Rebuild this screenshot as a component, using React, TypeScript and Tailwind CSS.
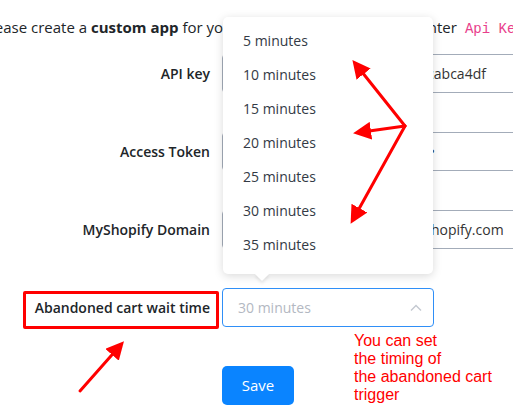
import React from 'react';

const options = [5, 10, 15, 20, 25, 30, 35, 40];

const rows = [
  { label: 'API key', value: '9e0c2f71b8d45e6a1c93f0b27cabca4df' },
  { label: 'Access Token', value: '•'.repeat(38) },
  { label: 'MyShopify Domain', value: 'abandoned-cart-testshop.myshopify.com' },
];

export default function App() {
  return (
    <div
      className="relative w-[513px] h-[416px] overflow-hidden bg-white text-[#212529]"
      style={{ fontFamily: '"Open Sans", "Noto Sans", sans-serif' }}
    >
      {/* intro line, scrolled so its start is cut off */}
      <p className="ml-[-18px] mt-[15px] h-[24px] whitespace-nowrap text-[15px] leading-[24px]">
        Please create a <b className="font-bold">custom app</b> for your own store in Shopify and enter
        <code
          className="ml-[8px] text-[14px] text-[#e83e8c]"
          style={{ fontFamily: '"Liberation Mono", "DejaVu Sans Mono", monospace' }}
        >
          Api Key
        </code>
      </p>

      <form className="mt-[15px] flex flex-col gap-[39px]">
        {rows.map((r) => (
          <div key={r.label} className="flex items-center gap-[12px] h-[39px]">
            <label className="w-[210px] shrink-0 text-right text-[14px] font-semibold">{r.label}</label>
            <div className="w-[330px] shrink-0 h-[39px] border border-[#a3acb9] rounded-[4px] px-[12px] flex items-center text-[14px] text-[#333] whitespace-nowrap overflow-hidden">
              {r.value}
            </div>
          </div>
        ))}

        <div className="flex items-center gap-[12px] h-[39px]">
          <label className="w-[210px] shrink-0 text-right text-[14px] font-semibold">Abandoned cart wait time</label>
          <div className="w-[212px] shrink-0 h-[39px] border border-[#2f8ff7] rounded-[4px] pl-[15px] pr-[10px] flex items-center justify-between text-[14px] text-[#b3b8c2]">
            <span>30 minutes</span>
            <svg width="14" height="14" viewBox="0 0 14 14" fill="none" stroke="#c3c8d0" strokeWidth="1.4">
              <path d="M2 9.5 L7 4.5 L12 9.5" />
            </svg>
          </div>
        </div>

        <div className="flex gap-[12px]">
          <div className="w-[210px] shrink-0" />
          <button
            type="button"
            className="w-[72px] h-[39px] rounded-[5px] bg-[#0a84ff] text-white text-[15px]"
          >
            Save
          </button>
        </div>
      </form>

      {/* open dropdown menu */}
      <div className="absolute left-[223px] top-[17px] w-[210px] h-[257px] rounded-[5px] bg-white shadow-[0_2px_10px_rgba(0,0,0,0.15)]">
        <div className="h-full overflow-hidden rounded-[5px] pt-[6px]">
          {options.map((m) => (
            <div key={m} className="h-[34px] pl-[20px] flex items-center text-[14px] text-[#333a45]">
              {m} minutes
            </div>
          ))}
        </div>
        <div className="absolute left-[34px] bottom-[-5px] w-[10px] h-[10px] rotate-45 bg-white shadow-[2px_2px_3px_rgba(0,0,0,0.08)]" />
      </div>

      {/* annotation */}
      <div className="absolute left-[23px] top-[291px] w-[196px] h-[38px] border-[3px] border-[#ff0000] rounded-[2px]" />
      <div
        className="absolute left-[354px] top-[332px] text-[16px] leading-[18px] text-[#ff0000]"
        style={{ fontFamily: '"Liberation Sans", Arial, sans-serif' }}
      >
        You can set
        <br />
        the timing of
        <br />
        the abandoned cart
        <br />
        trigger
      </div>

      <svg className="absolute left-0 top-0" width="513" height="416" viewBox="0 0 513 416">
        <defs>
          <marker id="ah" markerWidth="6" markerHeight="6" refX="3" refY="3" orient="auto" markerUnits="strokeWidth">
            <path d="M0 0 L6 3 L0 6 Z" fill="#ff0000" />
          </marker>
        </defs>
        <g stroke="#ff0000" strokeWidth="3" fill="none" strokeLinecap="round">
          <line x1="405" y1="126" x2="358" y2="67" markerEnd="url(#ah)" />
          <line x1="405" y1="126" x2="362" y2="132" markerEnd="url(#ah)" />
          <line x1="405" y1="126" x2="355" y2="216" markerEnd="url(#ah)" />
          <line x1="80" y1="391" x2="118" y2="348" markerEnd="url(#ah)" />
        </g>
      </svg>
    </div>
  );
}
